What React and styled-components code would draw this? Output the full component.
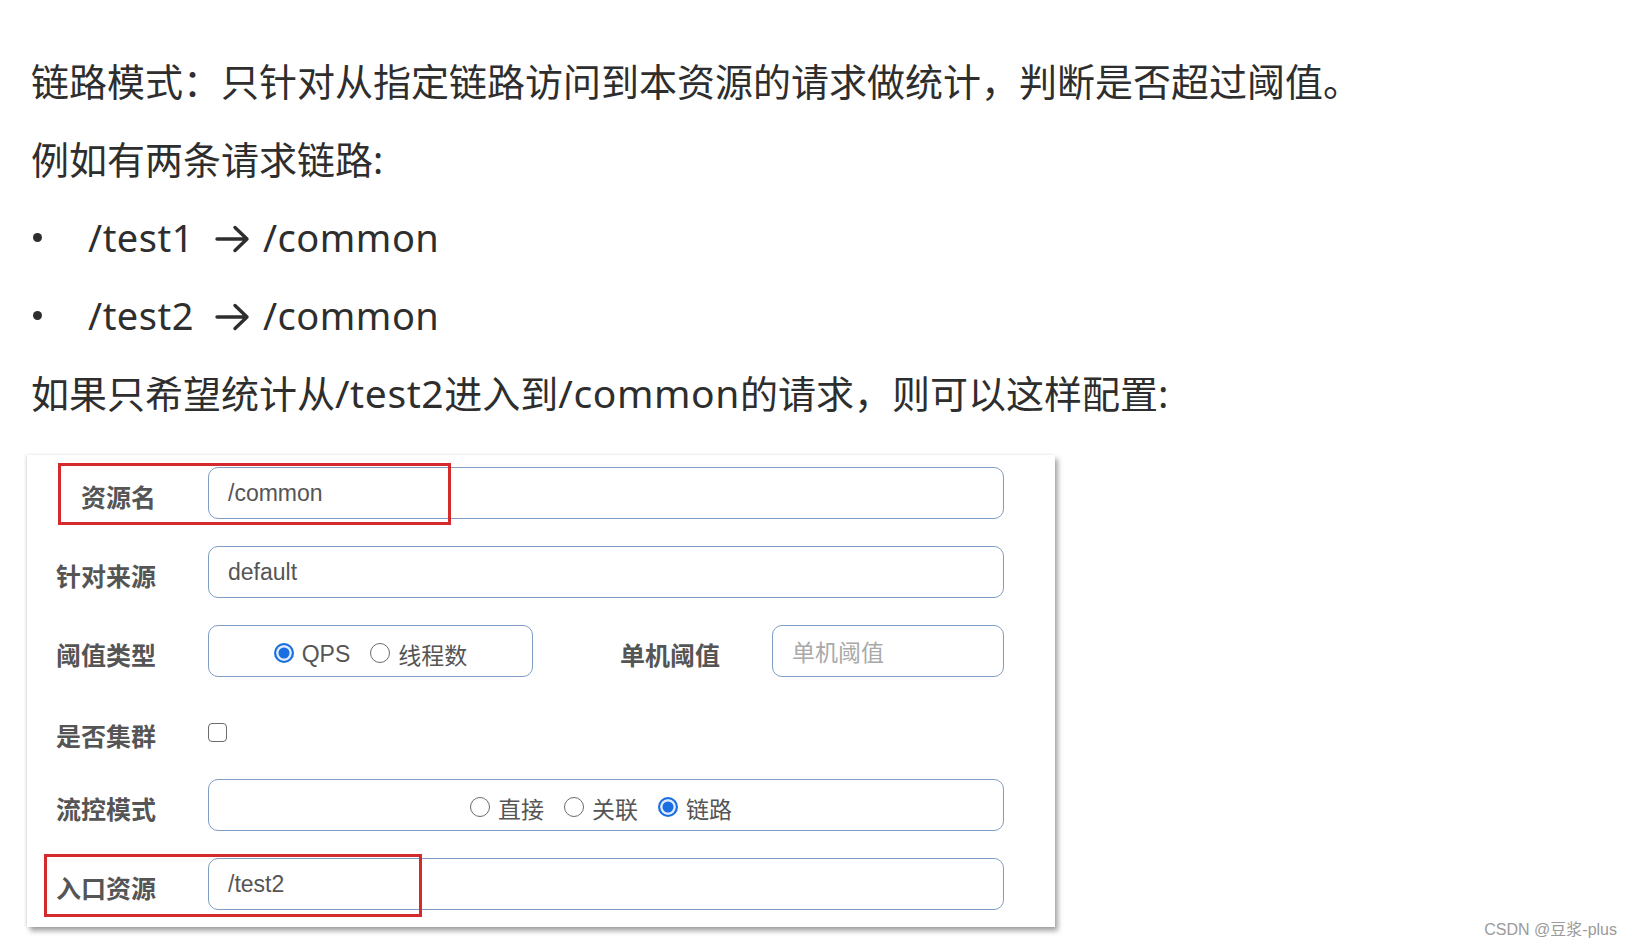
import React from "react";
import styled, { createGlobalStyle, css } from "styled-components";

const GlobalStyle = createGlobalStyle`
  html, body {
    margin: 0;
    background: #ffffff;
  }
  body {
    font-family: "Noto Sans", "Noto Sans CJK SC", sans-serif;
    color: #2e2e2e;
  }
`;

const Page = styled.div`
  position: relative;
  width: 1632px;
  height: 949px;
  padding-top: 42px;
  box-sizing: border-box;
  overflow: hidden;
`;

const Text = styled.div`
  padding-left: 31px;
  font-size: 38px;
  line-height: 78px;
  color: #2e2e2e;
  white-space: nowrap;
`;

const Line = styled.div`
  display: flex;
  align-items: center;
`;

const Latin = styled.span`
  font-size: ${(p) => (p.plain ? 38 : 39)}px;
  letter-spacing: ${(p) => (p.plain ? 0.5 : 0.6)}px;
`;

const Bullet = styled.span`
  display: inline-block;
  width: 57px;
  flex-shrink: 0;
  position: relative;
  height: 78px;

  &::before {
    content: "";
    position: absolute;
    left: 2px;
    top: 35px;
    width: 9px;
    height: 9px;
    border-radius: 50%;
    background: #2e2e2e;
  }
`;

const ArrowIcon = styled.svg`
  width: 37px;
  height: 30px;
  margin: 4px 12px 0 20px;
  flex-shrink: 0;
`;

const Card = styled.div`
  margin: 23px 0 0 27px;
  width: 1028px;
  box-sizing: border-box;
  padding: 12px 51px 17px 24px;
  display: flex;
  flex-direction: column;
  gap: 27px;
  background: #fff;
  box-shadow: 3px 4px 5px rgba(0, 0, 0, 0.35), -1px 0 3px rgba(0, 0, 0, 0.12);
  font-family: "Liberation Sans", "Noto Sans CJK SC", sans-serif;
`;

const Row = styled.div`
  position: relative;
  display: grid;
  grid-template-columns: ${(p) => p.cols || "105px 1fr"};
  column-gap: 52px;
  align-items: center;
  ${(p) =>
    p.short &&
    css`
      height: 40px;
      padding-top: 8px;
    `}
`;

const Label = styled.div`
  text-align: right;
  font-family: "Noto Sans CJK SC", sans-serif;
  font-weight: 700;
  font-size: 25px;
  color: #555;
  padding-top: 5px;
`;

const Field = styled.div`
  height: 52px;
  box-sizing: border-box;
  border: 1.5px solid #7f9cc2;
  border-radius: 10px;
  display: flex;
  align-items: center;
  justify-content: ${(p) => (p.center ? "center" : "flex-start")};
  padding: 0 19px;
  font-size: 23px;
  color: ${(p) => (p.placeholder ? "#a9a9a9" : "#555")};
  font-family: ${(p) =>
    p.placeholder
      ? `"Noto Sans CJK SC", sans-serif`
      : `"Liberation Sans", "Noto Sans CJK SC", sans-serif`};
`;

const RadioGroup = styled.div`
  display: flex;
  align-items: center;
  gap: 20px;
  padding-top: 6px;
  margin-left: ${(p) => p.shift || 0}px;
`;

const RadioItem = styled.label`
  display: flex;
  align-items: center;
  gap: 8px;
  font-size: 23px;
  color: #555;
`;

const RadioDot = styled.span`
  width: 20px;
  height: 20px;
  margin-top: -2px;
  box-sizing: border-box;
  border-radius: 50%;
  border: 1.5px solid #6b6b6b;
  background: #fff;
  ${(p) =>
    p.checked &&
    css`
      border: 2px solid #1a6fe0;
      background: #1a6fe0;
      box-shadow: inset 0 0 0 2.5px #dfeaff;
    `}
`;

const CjkText = styled.span`
  font-family: "Noto Sans CJK SC", sans-serif;
`;

const Checkbox = styled.span`
  width: 19px;
  height: 19px;
  box-sizing: border-box;
  border: 1.5px solid #6b6b6b;
  border-radius: 4px;
  display: block;
`;

const Highlight = styled.div`
  position: absolute;
  left: ${(p) => p.left}px;
  top: ${(p) => p.top}px;
  width: ${(p) => p.width}px;
  height: ${(p) => p.height}px;
  box-sizing: border-box;
  border: 3px solid #d42a2e;
  pointer-events: none;
`;

const Watermark = styled.div`
  position: absolute;
  right: 15px;
  bottom: 9px;
  font-family: "Liberation Sans", "Noto Sans CJK SC", sans-serif;
  font-size: 16px;
  color: #9a9a9a;
`;

function Radio({ checked, children }) {
  return (
    <RadioItem>
      <RadioDot checked={checked} />
      {children}
    </RadioItem>
  );
}

function Arrow() {
  return (
    <ArrowIcon viewBox="0 0 37 30">
      <path
        d="M3 15 H33 M21 3.5 L33 15 L21 26.5"
        fill="none"
        stroke="#2e2e2e"
        strokeWidth="3.4"
        strokeLinecap="round"
        strokeLinejoin="round"
      />
    </ArrowIcon>
  );
}

export default function App() {
  return (
    <Page>
      <GlobalStyle />
      <Text>
        <Line>链路模式：只针对从指定链路访问到本资源的请求做统计，判断是否超过阈值。</Line>
        <Line>例如有两条请求链路:</Line>
        <Line>
          <Bullet />
          <Latin plain>/test1</Latin>
          <Arrow />
          <Latin plain>/common</Latin>
        </Line>
        <Line>
          <Bullet />
          <Latin plain>/test2</Latin>
          <Arrow />
          <Latin plain>/common</Latin>
        </Line>
        <Line>
          如果只希望统计从<Latin>/test2</Latin>进入到<Latin>/common</Latin>的请求，则可以这样配置<Latin>:</Latin>
        </Line>
      </Text>

      <Card>
        <Row>
          <Label>资源名</Label>
          <Field>/common</Field>
          <Highlight left={7} top={-4} width={393} height={62} />
        </Row>
        <Row>
          <Label>针对来源</Label>
          <Field>default</Field>
        </Row>
        <Row cols="105px 325px 1fr 232px">
          <Label>阈值类型</Label>
          <Field center>
            <RadioGroup>
              <Radio checked>QPS</Radio>
              <Radio>
                <CjkText>线程数</CjkText>
              </Radio>
            </RadioGroup>
          </Field>
          <Label>单机阈值</Label>
          <Field placeholder>单机阈值</Field>
        </Row>
        <Row short>
          <Label>是否集群</Label>
          <Checkbox />
        </Row>
        <Row>
          <Label>流控模式</Label>
          <Field center>
            <RadioGroup shift={-10}>
              <Radio>
                <CjkText>直接</CjkText>
              </Radio>
              <Radio>
                <CjkText>关联</CjkText>
              </Radio>
              <Radio checked>
                <CjkText>链路</CjkText>
              </Radio>
            </RadioGroup>
          </Field>
        </Row>
        <Row>
          <Label>入口资源</Label>
          <Field>/test2</Field>
          <Highlight left={-7} top={-4} width={378} height={63} />
        </Row>
      </Card>

      <Watermark>CSDN @豆浆-plus</Watermark>
    </Page>
  );
}
